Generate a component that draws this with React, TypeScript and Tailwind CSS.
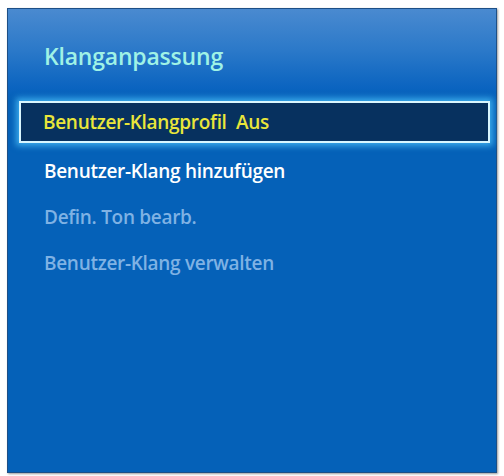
export default function App() {
  return (
    <div className="w-[504px] h-[476px] bg-white pt-[8px] pl-[7px]" style={{ fontFamily: '"Open Sans", "Noto Sans", sans-serif' }}>
      <div className="w-[490px] h-[465px] border border-[#1d4f86] bg-[#0561b8] shadow-[1px_1px_2px_rgba(0,0,0,0.4)] flex flex-col">
        <div className="h-[92px] bg-[linear-gradient(to_bottom,#4a8ad0_0%,#2b79c9_45%,#0b64c0_85%,#0561b8_100%)] pl-[36px] pt-[32px]">
          <div className="text-[23px] font-semibold text-[#9ff2e6] leading-[30px] tracking-[-0.2px]">Klanganpassung</div>
        </div>
        <div className="ml-[11px] mr-[6px] h-[42px] border-[2px] border-[#d8f6ff] bg-[#07315f] shadow-[0_0_6px_3px_rgba(80,200,255,0.7)] flex items-center pl-[22px]">
          <span className="text-[19px] font-semibold text-[#e9e63a] tracking-[-0.3px]">Benutzer-Klangprofil&nbsp; Aus</span>
        </div>
        <div className="flex flex-col pl-[36px] pt-[5px]">
          <div className="h-[46px] flex items-center text-[19px] font-semibold text-white tracking-[-0.3px]">Benutzer-Klang hinzufügen</div>
          <div className="h-[46px] flex items-center text-[19px] font-semibold text-[#7fb2e4] tracking-[-0.3px]">Defin. Ton bearb.</div>
          <div className="h-[46px] flex items-center text-[19px] font-semibold text-[#7fb2e4] tracking-[-0.3px]">Benutzer-Klang verwalten</div>
        </div>
      </div>
    </div>
  );
}
